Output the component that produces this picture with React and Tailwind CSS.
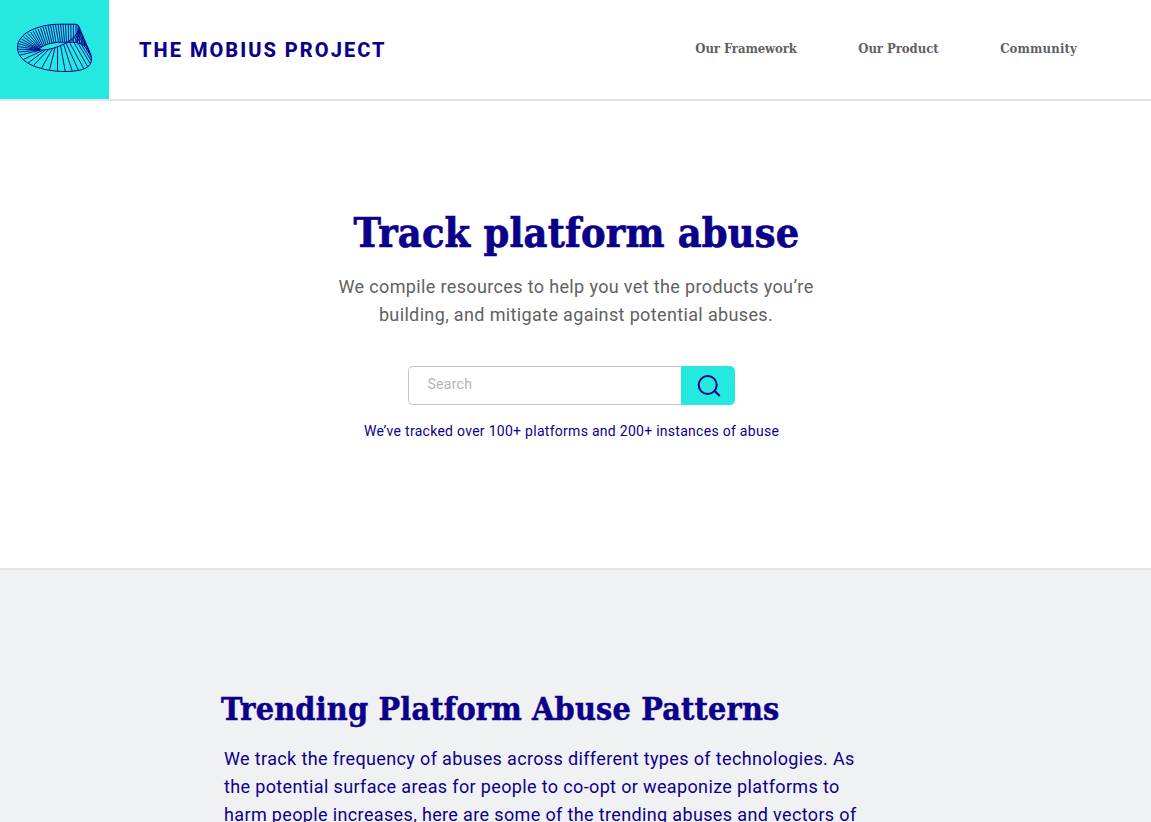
const SLAB = "font-['DejaVu_Serif_Condensed','DejaVu_Serif',serif] font-bold";

const RIBS = [
  // upper band, from the outer rim to the inner rim
  [76, 24, 76, 42], [73.4, 24, 73.4, 42], [70.8, 24, 71, 42], [68.2, 24, 68.7, 42],
  [65.5, 24, 66.5, 42], [63, 24, 64.5, 42], [60.5, 24.3, 62.5, 42], [58, 24.5, 60.5, 42],
  [55.5, 24.7, 58.5, 42.2], [53, 25, 56, 42.5], [50.5, 25.4, 54, 42.8], [48, 25.9, 52, 43.2],
  [45.5, 26.4, 50, 43.6], [43, 27, 48, 44], [40.5, 27.8, 46, 44.6], [38, 28.7, 44.5, 45.4],
  [35.5, 29.6, 43, 46.2], [33, 30.7, 42, 47], [30.5, 32, 41, 47.5], [28, 33.4, 40.5, 48],
  [25.6, 35.1, 40, 48.4], [23.4, 36.9, 39.5, 48.7], [21.4, 39, 39, 49], [19.6, 41.3, 39, 49.3],
  [18.4, 43.7, 39, 49.5], [17.7, 46.5, 39, 49.7], [17.8, 49.2, 39.5, 49.8], [18.5, 52, 40, 50],
  [20.3, 55, 40.5, 50.2], [23.8, 59.3, 43, 50.2], [28.3, 62.8, 45.5, 50],
  [33.5, 65.5, 48.5, 49.7], [41.5, 68.3, 52.5, 48.5], [49.5, 70, 55, 47.8],
  [57.5, 71, 57.5, 46.8], [65.3, 71.5, 60.5, 45.5], [72.3, 71.3, 63.5, 44], [78.5, 70.5, 66, 43],
  [84, 69, 69, 41.5], [87.8, 66.8, 72, 39], [90.5, 64, 74, 36.8], [91.5, 61, 75.5, 35],
  [91.7, 58, 77, 33], [91, 55, 78, 31], [89.7, 51.8, 79, 29],
  [78, 25, 77.5, 42.5], [79, 27, 79.5, 43], [80.5, 30.5, 81.5, 44], [82.5, 35, 83, 45],
  [84.5, 40, 84.5, 46.2], [79.8, 29, 77, 42],
];

function MobiusLogo() {
  return (
    <svg width="109" height="99" viewBox="0 0 109 99" fill="none" stroke="#0c008b" aria-hidden="true">
      <path
        strokeWidth="1"
        d="M39 49.5C42 45.5 50 42.3 62 42.2H73C81 42.5 87 46 91.7 58M39 50C49 50.5 58 47 66 43C73 39 77 34 79.5 28"
      />
      <path
        strokeWidth="1"
        d="M17.5 47.5C17.5 34 36 24.2 61 24.2H75C78 24.2 79 26 80 29L90.7 54.5C94 65 87.5 71.5 65 71.5C43 71.5 17.5 64 17.5 47.5Z"
      />
      <path strokeWidth="0.9" d={RIBS.map(([a, b, c, d]) => `M${a} ${b}L${c} ${d}`).join("")} />
    </svg>
  );
}

function Header() {
  return (
    <header className="flex h-[101px] items-start border-b-2 border-[#e4e4e8] bg-white">
      <a href="#" className="block h-[99px] w-[109px] shrink-0 bg-[#25e8de]">
        <MobiusLogo />
      </a>
      <span className="ml-[30px] flex h-[99px] items-center text-[20px] font-extrabold tracking-[2.03px] text-[#0c008b]">
        THE MOBIUS PROJECT
      </span>
      <nav className={`${SLAB} ml-auto mr-[74px] flex h-[97px] items-center gap-[61.5px] whitespace-nowrap text-[13px] text-[#616161]`}>
        <a href="#" className="tracking-[-0.1px]">Our Framework</a>
        <a href="#" className="tracking-[-0.05px]">Our Product</a>
        <a href="#" className="tracking-[0.15px]">Community</a>
      </nav>
    </header>
  );
}

function SearchBar() {
  return (
    <form className="mr-[9px] mt-[37px] flex h-[39px] w-[327px]">
      <input
        type="text"
        placeholder="Search"
        className="min-w-0 flex-1 rounded-l-[5px] border border-r-0 border-[#c4c4c4] bg-white pb-[3px] pl-[19px] text-[14px] tracking-[0.28px] outline-none placeholder:text-[#b3b3b3]"
      />
      <button type="button" aria-label="Search" className="w-[54px] rounded-r-[5px] bg-[#25e8de]">
        <svg width="54" height="39" viewBox="0 0 54 39" fill="none" stroke="#0c008b" strokeWidth="2">
          <circle cx="26.7" cy="19" r="9" />
          <path d="M33 24.3L38.7 30" />
        </svg>
      </button>
    </form>
  );
}

export default function App() {
  return (
    <div className="h-[822px] overflow-hidden bg-white font-['Roboto',sans-serif]">
      <Header />
      <section className="flex h-[467px] flex-col items-center pt-[102px]">
        <h1 className={`${SLAB} ml-[2px] h-[60px] whitespace-nowrap text-[41px] leading-[60px] tracking-[0.2px] text-[#0c008b] [-webkit-text-stroke:0.7px_#0c008b]`}>
          Track platform abuse
        </h1>
        <p className="ml-px mt-[10px] whitespace-nowrap text-center text-[18px] leading-[28px] tracking-[0.36px] text-[#616161]">
          We compile resources to help you vet the products you’re
          <br />
          building, and mitigate against potential abuses.
        </p>
        <SearchBar />
        <p className="mr-[8px] mt-[16px] whitespace-nowrap text-[14px] leading-[20px] tracking-[0.28px] text-[#0c008b]">
          We’ve tracked over 100+ platforms and 200+ instances of abuse
        </p>
      </section>
      <section className="h-[254px] overflow-hidden border-t-2 border-[#e4e4e8] bg-[#f0f1f3] pl-[224px] pt-[114px] text-[#0c008b]">
        <h2 className={`${SLAB} -ml-[3px] h-[50px] whitespace-nowrap text-[32px] leading-[50px] tracking-[0.2px] [-webkit-text-stroke:0.5px_#0c008b]`}>
          Trending Platform Abuse Patterns
        </h2>
        <p className="mt-[11px] whitespace-nowrap text-[18px] leading-[28px] tracking-[0.36px]">
          We track the frequency of abuses across different types of technologies. As
          <br />
          the potential surface areas for people to co-opt or weaponize platforms to
          <br />
          harm people increases, here are some of the trending abuses and vectors of
        </p>
      </section>
    </div>
  );
}
